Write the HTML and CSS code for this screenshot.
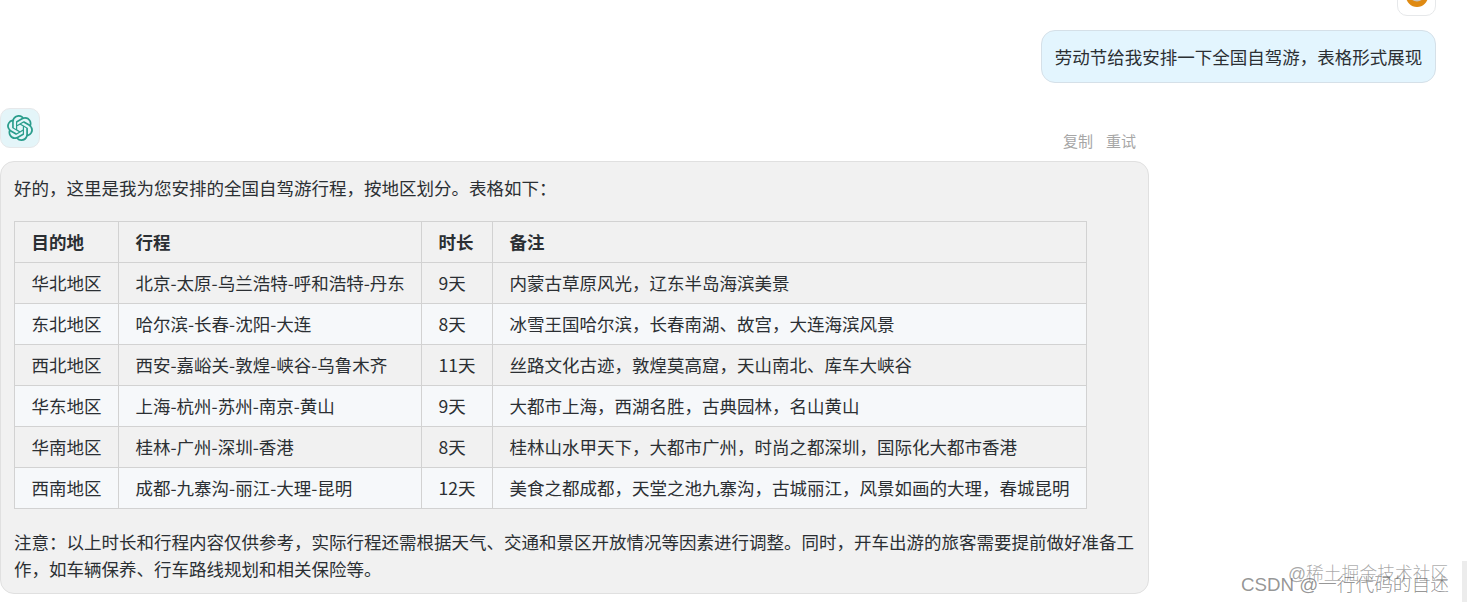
FILE: index.html
```html
<!DOCTYPE html>
<html lang="zh-CN">
<head>
<meta charset="utf-8">
<title>全国自驾游</title>
<link rel="stylesheet" href="styles.css">
</head>
<body>
<main class="chat">
  <section class="msg-user">
    <div class="avatar avatar-user">
      <svg width="22" height="22" viewBox="0 0 22 22"><circle cx="11" cy="11" r="11" fill="#df8a12"/><circle cx="11" cy="8.5" r="8" fill="#c9c4ba"/></svg>
    </div>
    <div class="bubble-user">劳动节给我安排一下全国自驾游，表格形式展现</div>
  </section>
  <section class="msg-bot">
    <div class="bot-head">
      <div class="avatar avatar-bot">
        <svg width="26" height="26" viewBox="0 0 24 24"><path fill="#2a9d8c" d="M22.2819 9.8211a5.9847 5.9847 0 0 0-.5157-4.9108 6.0462 6.0462 0 0 0-6.5098-2.9A6.0651 6.0651 0 0 0 4.9807 4.1818a5.9847 5.9847 0 0 0-3.9977 2.9 6.0462 6.0462 0 0 0 .7427 7.0966 5.98 5.98 0 0 0 .511 4.9107 6.051 6.051 0 0 0 6.5146 2.9001A5.9847 5.9847 0 0 0 13.2599 24a6.0557 6.0557 0 0 0 5.7718-4.2058 5.9894 5.9894 0 0 0 3.9977-2.9001 6.0557 6.0557 0 0 0-.7475-7.0729zm-9.022 12.6081a4.4755 4.4755 0 0 1-2.8764-1.0408l.1419-.0804 4.7783-2.7582a.7948.7948 0 0 0 .3927-.6813v-6.7369l2.02 1.1686a.071.071 0 0 1 .038.052v5.5826a4.504 4.504 0 0 1-4.4945 4.4944zm-9.6607-4.1254a4.4708 4.4708 0 0 1-.5346-3.0137l.142.0852 4.783 2.7582a.7712.7712 0 0 0 .7806 0l5.8428-3.3685v2.3324a.0804.0804 0 0 1-.0332.0615L9.74 19.9502a4.4992 4.4992 0 0 1-6.1408-1.6464zM2.3408 7.8956a4.485 4.485 0 0 1 2.3655-1.9728V11.6a.7664.7664 0 0 0 .3879.6765l5.8144 3.3543-2.0201 1.1685a.0757.0757 0 0 1-.071 0l-4.8303-2.7865A4.504 4.504 0 0 1 2.3408 7.872zm16.5963 3.8558L13.1038 8.364 15.1192 7.2a.0757.0757 0 0 1 .071 0l4.8303 2.7913a4.4944 4.4944 0 0 1-.6765 8.1042v-5.6772a.79.79 0 0 0-.407-.667zm2.0107-3.0231l-.142-.0852-4.7735-2.7818a.7759.7759 0 0 0-.7854 0L9.409 9.2297V6.8974a.0662.0662 0 0 1 .0284-.0615l4.8303-2.7866a4.4992 4.4992 0 0 1 6.6802 4.66zM8.3065 12.863l-2.02-1.1638a.0804.0804 0 0 1-.038-.0567V6.0742a4.4992 4.4992 0 0 1 7.3757-3.4537l-.142.0805L8.704 5.459a.7948.7948 0 0 0-.3927.6813zm1.0976-2.3654l2.602-1.4998 2.6069 1.4998v2.9994l-2.5974 1.4997-2.6067-1.4997Z"/></svg>
      </div>
      <div class="actions"><span>复制</span><span>重试</span></div>
    </div>
    <div class="bubble-bot">
      <p class="intro">好的，这里是我为您安排的全国自驾游行程，按地区划分。表格如下：</p>
      <table class="trip">
        <thead>
          <tr><th class="c1">目的地</th><th class="c2">行程</th><th class="c3">时长</th><th class="c4">备注</th></tr>
        </thead>
        <tbody>
          <tr><td>华北地区</td><td>北京-太原-乌兰浩特-呼和浩特-丹东</td><td>9天</td><td>内蒙古草原风光，辽东半岛海滨美景</td></tr>
          <tr><td>东北地区</td><td>哈尔滨-长春-沈阳-大连</td><td>8天</td><td>冰雪王国哈尔滨，长春南湖、故宫，大连海滨风景</td></tr>
          <tr><td>西北地区</td><td>西安-嘉峪关-敦煌-峡谷-乌鲁木齐</td><td>11天</td><td>丝路文化古迹，敦煌莫高窟，天山南北、库车大峡谷</td></tr>
          <tr><td>华东地区</td><td>上海-杭州-苏州-南京-黄山</td><td>9天</td><td>大都市上海，西湖名胜，古典园林，名山黄山</td></tr>
          <tr><td>华南地区</td><td>桂林-广州-深圳-香港</td><td>8天</td><td>桂林山水甲天下，大都市广州，时尚之都深圳，国际化大都市香港</td></tr>
          <tr><td>西南地区</td><td>成都-九寨沟-丽江-大理-昆明</td><td>12天</td><td>美食之都成都，天堂之池九寨沟，古城丽江，风景如画的大理，春城昆明</td></tr>
        </tbody>
      </table>
      <p class="note">注意：以上时长和行程内容仅供参考，实际行程还需根据天气、交通和景区开放情况等因素进行调整。同时，开车出游的旅客需要提前做好准备工作，如车辆保养、行车路线规划和相关保险等。</p>
    </div>
  </section>
</main>
<div class="wm wm-juejin">@稀土掘金技术社区</div>
<div class="wm wm-csdn">CSDN @一行代码的自述</div>
<div class="edge"></div>
</body>
</html>
```
FILE: styles.css
```css
* { box-sizing: border-box; }
html, body { margin: 0; padding: 0; height: 602px; overflow: hidden; background: #fff; }
body {
  position: relative;
  font-family: "Noto Sans CJK SC", "Noto Sans", sans-serif;
  font-size: 17.5px;
  color: #2b2f33;
}
.chat { margin-top: -24px; display: flex; flex-direction: column; }
.avatar {
  width: 40px; height: 40px;
  border: 1px solid #e6e8ea;
  border-radius: 10px;
  display: flex; align-items: center; justify-content: center;
  overflow: hidden;
}
.msg-user { display: flex; flex-direction: column; align-items: flex-end; padding-right: 31px; gap: 14px; }
.avatar-user { width: 39px; background: #fff; }
.bubble-user {
  width: 395px; height: 53px;
  display: flex; align-items: center; justify-content: center;
  background: #e3f5fe;
  border: 1px solid #d5e0e8;
  border-radius: 14px;
  white-space: nowrap;
  line-height: 26px;
}
.msg-bot { width: 1149px; margin-top: 25px; }
.bot-head { display: flex; justify-content: space-between; align-items: flex-start; height: 53px; padding-right: 13px; }
.avatar-bot { background: #e4f5f9; }
.actions { margin-top: 23px; display: flex; gap: 13px; font-size: 15px; line-height: 20px; color: #a6a6a6; }
.bubble-bot {
  height: 433px;
  background: #f1f1f1;
  border: 1px solid #e0e0e0;
  border-radius: 14px;
  padding: 0 13px;
}
.intro { margin: 13px 0 20px; line-height: 26px; }
.trip { border-collapse: collapse; table-layout: fixed; width: 1072px; }
.trip th, .trip td {
  border: 1px solid #d2d2d2;
  height: 41px;
  padding: 0 16px 0 16.5px;
  text-align: left;
  font-size: 17.5px;
  line-height: 24px;
  white-space: nowrap;
  overflow: hidden;
}
.trip th { font-weight: 700; }
.trip tbody tr:nth-child(even) { background: #f6f8fa; }
.c1 { width: 104px; }
.c2 { width: 303px; }
.c3 { width: 71px; }
.c4 { width: 594px; }
.note { margin: 19px 0 0; line-height: 27px; }
.wm { position: absolute; white-space: nowrap; font-weight: 300; font-family: "Liberation Sans", "Noto Sans CJK SC", sans-serif; }
.wm-juejin { left: 1288px; top: 563px; font-size: 17.8px; line-height: 22px; color: rgba(110,110,110,.6); }
.wm-csdn { left: 1241px; top: 574px; font-size: 18.7px; line-height: 22px; color: rgba(90,90,90,.65); }
.edge { position: absolute; left: 1462px; top: 561px; width: 5px; height: 41px; background: #ececec; }
```
